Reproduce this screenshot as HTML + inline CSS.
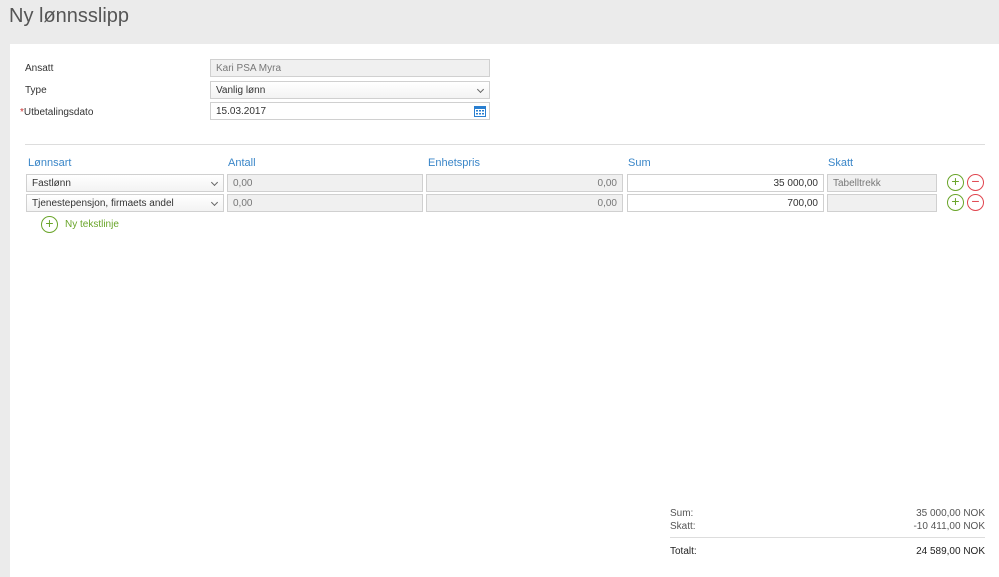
<!DOCTYPE html>
<html><head><meta charset="utf-8"><style>
*{box-sizing:border-box;margin:0;padding:0}
body{width:999px;height:577px;background:#ebebeb;font-family:"Liberation Sans",sans-serif;font-size:10px;color:#333;position:relative;overflow:hidden}
.a{position:absolute}
h1{position:absolute;left:9px;top:5px;font-weight:normal;font-size:20px;color:#555}
.panel{position:absolute;left:10px;top:44px;width:989px;height:533px;background:#fff}
.lbl{position:absolute;font-size:10px;color:#333}
.in{position:absolute;height:18px;border:1px solid #d0d0d0;background:#fff;padding:0 5px;line-height:18px;font-size:10px;color:#333}
.ro{background:#f0f0f0;color:#777}
.sel{background:linear-gradient(#fff,#f3f3f3)}
.r{text-align:right}
.chev{position:absolute;right:6px;top:5px;width:5px;height:5px;border-right:1px solid #666;border-bottom:1px solid #666;transform:rotate(45deg)}
.hd{position:absolute;top:157px;color:#3a86c8;font-size:11px}
.ic{position:absolute;width:17px;height:17px;border-radius:50%;border:1.5px solid;font-size:14px;line-height:13px;text-align:center}
.pl{border-color:#6aa52a;color:#6aa52a}
.mi{border-color:#e0454f;color:#e0454f}
</style></head><body>
<h1>Ny lønnsslipp</h1>
<div class="panel"></div>
<div class="lbl" style="left:25px;top:63px">Ansatt</div>
<div class="lbl" style="left:25px;top:85px">Type</div>
<div class="lbl" style="left:20px;top:107px"><span style="color:#c33">*</span>Utbetalingsdato</div>
<div class="in ro" style="left:210px;top:59px;width:280px">Kari PSA Myra</div>
<div class="in sel" style="left:210px;top:81px;width:280px">Vanlig lønn<span class="chev"></span></div>
<div class="in" style="left:210px;top:102px;width:280px">15.03.2017
<svg class="a" style="right:3px;top:2px" width="12" height="12" viewBox="0 0 12 12"><rect x="0.5" y="1.5" width="11" height="10" fill="#fff" stroke="#2a7fd0"/><rect x="0.5" y="1.5" width="11" height="2.5" fill="#2a7fd0"/><g fill="#2a7fd0"><rect x="2" y="5" width="2" height="1.5"/><rect x="5" y="5" width="2" height="1.5"/><rect x="8" y="5" width="2" height="1.5"/><rect x="2" y="8" width="2" height="1.5"/><rect x="5" y="8" width="2" height="1.5"/><rect x="8" y="8" width="2" height="1.5"/></g></svg></div>
<div class="a" style="left:25px;top:144px;width:960px;height:1px;background:#ddd"></div>
<div class="hd" style="left:28px">Lønnsart</div>
<div class="hd" style="left:228px">Antall</div>
<div class="hd" style="left:428px">Enhetspris</div>
<div class="hd" style="left:628px">Sum</div>
<div class="hd" style="left:828px">Skatt</div>

<div class="in sel" style="left:26px;top:174px;width:198px">Fastlønn<span class="chev"></span></div>
<div class="in ro" style="left:227px;top:174px;width:196px">0,00</div>
<div class="in ro r" style="left:426px;top:174px;width:197px">0,00</div>
<div class="in r" style="left:627px;top:174px;width:197px">35 000,00</div>
<div class="in ro" style="left:827px;top:174px;width:110px">Tabelltrekk</div>
<div class="ic pl" style="left:947px;top:174px">+</div>
<div class="ic mi" style="left:967px;top:174px">−</div>

<div class="in sel" style="left:26px;top:194px;width:198px">Tjenestepensjon, firmaets andel<span class="chev"></span></div>
<div class="in ro" style="left:227px;top:194px;width:196px">0,00</div>
<div class="in ro r" style="left:426px;top:194px;width:197px">0,00</div>
<div class="in r" style="left:627px;top:194px;width:197px">700,00</div>
<div class="in ro" style="left:827px;top:194px;width:110px"></div>
<div class="ic pl" style="left:41px;top:216px">+</div>
<div class="ic pl" style="left:947px;top:194px">+</div>
<div class="ic mi" style="left:967px;top:194px">−</div>

<div class="a" style="left:65px;top:219px;color:#6aa52a">Ny tekstlinje</div>

<div class="a" style="left:670px;top:508px;color:#555">Sum:</div>
<div class="a r" style="left:800px;width:185px;top:508px;color:#555">35 000,00 NOK</div>
<div class="a" style="left:670px;top:521px;color:#555">Skatt:</div>
<div class="a r" style="left:800px;width:185px;top:521px;color:#555">-10 411,00 NOK</div>
<div class="a" style="left:670px;top:537px;width:315px;height:1px;background:#ddd"></div>
<div class="a" style="left:670px;top:546px;color:#222">Totalt:</div>
<div class="a r" style="left:800px;width:185px;top:546px;color:#222">24 589,00 NOK</div>
</body></html>
